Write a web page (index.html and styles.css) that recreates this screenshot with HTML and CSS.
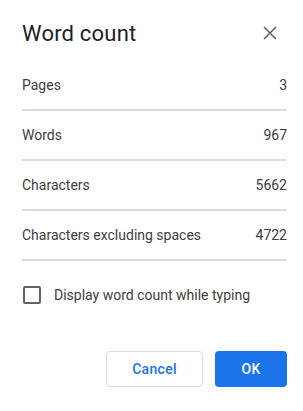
FILE: index.html
```html
<!DOCTYPE html>
<html lang="en">
<head>
    <meta charset="UTF-8">
    <meta name="viewport" content="width=device-width, initial-scale=1.0">
    <title>Word count</title>
    <link rel="stylesheet" href="styles.css">
</head>
<body>
    <div class="dialog">
        <div class="dialog-header">
            <h1>Word count</h1>
            <button class="close-btn" aria-label="Close">
                <svg width="14" height="14" viewBox="0 0 14 14">
                    <path d="M1 1L13 13M13 1L1 13" stroke="#5f6368" stroke-width="1.6" fill="none"/>
                </svg>
            </button>
        </div>

        <div class="stats">
            <div class="stat-row"><span>Pages</span><span>3</span></div>
            <div class="stat-row"><span>Words</span><span>967</span></div>
            <div class="stat-row"><span>Characters</span><span>5662</span></div>
            <div class="stat-row"><span>Characters excluding spaces</span><span>4722</span></div>
        </div>

        <label class="check-row">
            <span class="checkbox"></span>
            <span>Display word count while typing</span>
        </label>

        <div class="actions">
            <button class="btn btn-cancel">Cancel</button>
            <button class="btn btn-ok">OK</button>
        </div>
    </div>
</body>
</html>
```

FILE: styles.css
```css
body {
    margin: 0;
    background: #fff;
    font-family: Roboto, Arial, sans-serif;
    color: #3c4043;
}

.dialog {
    padding: 18px 16px 24px 22px;
}

.dialog-header {
    display: flex;
    align-items: center;
    justify-content: space-between;
    height: 30px;
    margin-bottom: 13px;
}

h1 {
    margin: 0;
    font-size: 22px;
    font-weight: 400;
    letter-spacing: 0.2px;
    color: #202124;
}

.close-btn {
    border: none;
    background: none;
    padding: 0;
    margin-right: 10px;
    width: 14px;
    height: 14px;
    display: flex;
}

.stat-row {
    display: flex;
    justify-content: space-between;
    align-items: center;
    height: 48px;
    border-bottom: 2px solid #dadce0;
    font-size: 14px;
}

.check-row {
    display: flex;
    align-items: center;
    gap: 13px;
    margin-top: 25px;
    padding-left: 1px;
    font-size: 14px;
}

.checkbox {
    width: 14px;
    height: 14px;
    border: 2px solid #5f6368;
    border-radius: 2px;
}

.actions {
    display: flex;
    justify-content: flex-end;
    gap: 12px;
    margin-top: 47px;
}

.btn {
    height: 36px;
    border-radius: 4px;
    font-family: Roboto, Arial, sans-serif;
    font-size: 14px;
    font-weight: 500;
    letter-spacing: 0.3px;
}

.btn-cancel {
    width: 97px;
    background: #fff;
    border: 1px solid #dadce0;
    color: #1a73e8;
}

.btn-ok {
    width: 72px;
    background: #1a73e8;
    border: none;
    color: #fff;
}
```
